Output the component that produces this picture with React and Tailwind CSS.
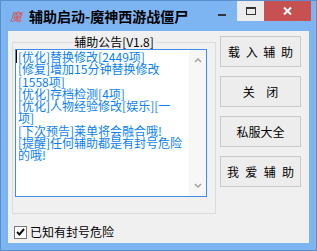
import React from "react";

const cjk = { fontFamily: '"Noto Sans CJK SC", "Noto Sans", sans-serif' };

const notes = [
  "[优化]替换修改[2449项]",
  "[修复]增加15分钟替换修改",
  "[1558项]",
  "[优化]存档检测[4项]",
  "[优化]人物经验修改[娱乐][一",
  "项]",
  "[下次预告]莱单将会融合哦!",
  "[提醒]任何辅助都是有封号危险",
  "的哦!",
];

const buttons = [
  { label: "载 入 辅 助", cls: "[word-spacing:3px]" },
  { label: "关 闭", cls: "[word-spacing:9px]" },
  { label: "私服大全", cls: "" },
  { label: "我 爱 辅 助", cls: "[word-spacing:3.6px]" },
];

function Chevron({ down }) {
  return (
    <svg width="8" height="5" viewBox="0 0 8 5">
      <path
        d={down ? "M1 1 L4 4 L7 1" : "M1 4 L4 1 L7 4"}
        fill="none"
        stroke="#a6a6a6"
        strokeWidth="1.6"
      />
    </svg>
  );
}

export default function App() {
  return (
    <div
      className="w-[317px] h-[251px] bg-[#7db5f3] border border-[#5b8fcb] flex flex-col overflow-hidden"
      style={cjk}
    >
      {/* title bar */}
      <div className="h-[30px] flex items-start">
        <div className="flex items-center pl-[9px] pt-[5px] h-[24px]">
          <span className="text-[12px] leading-[12px] text-[#d9534f] italic w-[12px]">魔</span>
          <span className="ml-[7px] text-[14px] leading-[16px] font-bold text-black">
            辅助启动-魔神西游战僵尸
          </span>
        </div>
        <div className="ml-auto mr-[5px] flex">
          <div className="w-[27px] h-[20px] flex items-center justify-center">
            <div className="w-[8px] h-[2px] bg-[#333] mt-[7px] -ml-[3px]" />
          </div>
          <div className="w-[27px] h-[20px] bg-[#ececec] flex items-center justify-center">
            <div className="w-[10px] h-[8px] border border-[#333] border-t-2" />
          </div>
          <div className="w-[47px] h-[20px] bg-[#c75050] flex items-center justify-center">
            <svg width="9" height="8" viewBox="0 0 9 8">
              <path d="M1 0.5 L8 7.5 M8 0.5 L1 7.5" stroke="#fff" strokeWidth="2" />
            </svg>
          </div>
        </div>
      </div>

      {/* client area */}
      <div className="mx-[7px] h-[212px] bg-[#f0f0f0] flex flex-col">
        <div className="flex pl-[4px] pt-[5px]">
          <div className="relative mt-[6px] w-[204px] h-[172px] border border-[#dcdcdc]">
            <span className="absolute top-[-8px] left-1/2 -translate-x-1/2 bg-[#f0f0f0] px-[1px] text-[12px] leading-[14px] text-black whitespace-nowrap">
              辅助公告[V1.8]
            </span>
            <div className="mt-[6px] ml-[2px] w-[192px] h-[148px] border border-[#3d8ee8] bg-white flex">
              <div className="relative flex-1 pl-[2px] pt-[1px] text-[12px] leading-[12.25px] text-[#0a7ff5]">
                <div className="absolute left-[0px] top-[0px] w-[1px] h-[13px] bg-black" />
                {notes.map((n) => (
                  <div key={n} className="whitespace-nowrap">{n}</div>
                ))}
              </div>
              <div className="w-[17px] bg-[#f7f7f7] flex flex-col items-center justify-between pt-[8px] pb-[8px]">
                <Chevron />
                <Chevron down />
              </div>
            </div>
          </div>
          <div className="ml-[4px] flex flex-col gap-[9px]">
            {buttons.map((b) => (
              <div
                key={b.label}
                className={`w-[81px] h-[31px] bg-[#ededed] border border-[#c9c9c9] flex items-center justify-center text-[12px] leading-[14px] text-black whitespace-pre ${b.cls}`}
              >
                {b.label}
              </div>
            ))}
          </div>
        </div>
        <div className="mt-[11px] pl-[6px] flex items-center">
          <div className="w-[13px] h-[13px] border border-[#777] bg-white flex items-center justify-center">
            <svg width="9" height="8" viewBox="0 0 9 8">
              <path d="M1 4 L3.5 6.5 L8 1" fill="none" stroke="#111" strokeWidth="2" />
            </svg>
          </div>
          <span className="ml-[3px] text-[12px] leading-[14px] text-black">已知有封号危险</span>
        </div>
      </div>
    </div>
  );
}
